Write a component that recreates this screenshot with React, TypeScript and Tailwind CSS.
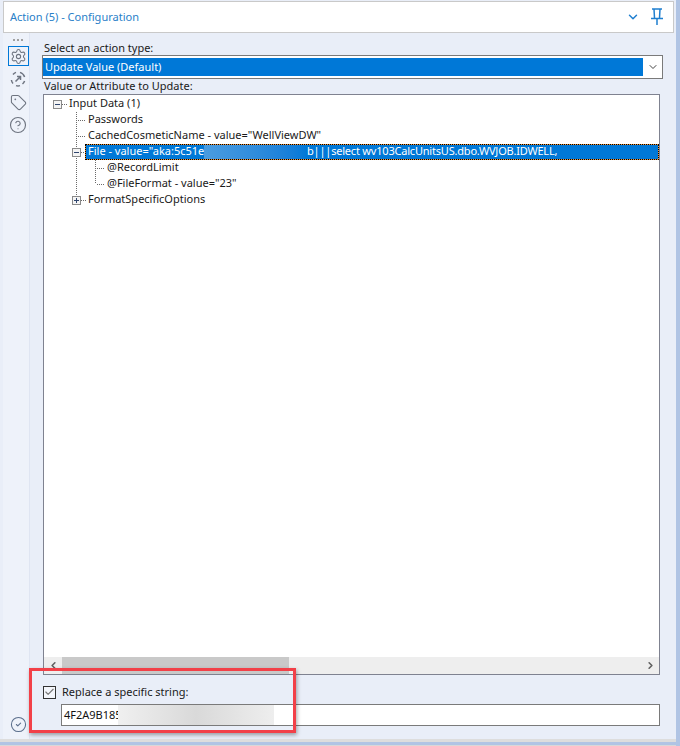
import { Settings, Tag, CircleHelp, CircleCheck, ChevronDown, ChevronLeft, ChevronRight, Check } from 'lucide-react'

type Cell = 'blank' | 'v' | 'tee' | 'ell' | 'minus' | 'teeMinus' | 'ellPlus'

const font = 'font-["Noto_Sans",sans-serif]'

function Expander({ plus }: { plus?: boolean }) {
  return (
    <>
      <rect x="5.5" y="4.5" width="8" height="8" fill="#f4f4f4" stroke="#8a8a8a" />
      <path d="M7 8.5h5" stroke="#30466e" />
      {plus && <path d="M9.5 6v5" stroke="#30466e" />}
    </>
  )
}

function TreeCell({ kind }: { kind: Cell }) {
  const dot = { stroke: '#6b6b6b', strokeDasharray: '1 1', fill: 'none' }
  return (
    <svg width="19" height="16" className="shrink-0">
      {(kind === 'v' || kind === 'tee' || kind === 'teeMinus') && <path d="M9.5 0v16" {...dot} />}
      {(kind === 'ell' || kind === 'ellPlus') && <path d="M9.5 0v8" {...dot} />}
      {(kind === 'tee' || kind === 'ell') && <path d="M11 8.5H19" {...dot} />}
      {(kind === 'minus' || kind === 'teeMinus' || kind === 'ellPlus') && <path d="M14 8.5h5" {...dot} />}
      {(kind === 'minus' || kind === 'teeMinus') && <Expander />}
      {kind === 'ellPlus' && <Expander plus />}
    </svg>
  )
}

const rows: { cells: Cell[]; text: string }[] = [
  { cells: ['minus'], text: 'Input Data (1)' },
  { cells: ['blank', 'tee'], text: 'Passwords' },
  { cells: ['blank', 'tee'], text: 'CachedCosmeticName - value="WellViewDW"' },
  { cells: ['blank', 'teeMinus'], text: '' },
  { cells: ['blank', 'v', 'tee'], text: '@RecordLimit' },
  { cells: ['blank', 'v', 'ell'], text: '@FileFormat - value="23"' },
  { cells: ['blank', 'ellPlus'], text: 'FormatSpecificOptions' },
]

function ToolButton({ active, children }: { active?: boolean; children: React.ReactNode }) {
  return (
    <div className={`w-[21px] h-[20px] flex items-center justify-center border ${active ? 'border-[#0078d7]' : 'border-transparent'}`}>
      {children}
    </div>
  )
}

export default function App() {
  return (
    <div className={`relative w-[680px] h-[746px] overflow-hidden bg-[#e9eef8] text-[11px] leading-[16px] text-[#1a1a1a] flex flex-col ${font}`}>
      {/* Title bar */}
      <div className="mt-[1px] ml-[3px] mr-[6px] h-[32px] shrink-0 bg-white border border-[#c9c9c9] flex items-center pl-[6px] pr-[9px]">
        <span className="text-[#2a80c8]">Action (5) - Configuration</span>
        <ChevronDown size={14} strokeWidth={2.5} className="ml-auto mr-[10px] text-[#1f7fd0]" />
        <svg width="14" height="18" viewBox="0 0 14 18" fill="none" stroke="#1f7fd0" strokeWidth="1.5">
          <path d="M2 1h10M4 1l.5 9M10 1l-.5 9M1 10.5h12M7 11v6" />
        </svg>
      </div>

      <div className="flex-1 flex min-h-0">
        {/* Tool rail */}
        <div className="ml-[3px] w-[27px] bg-[#eef2fa] border-r border-[#dfe5f2] flex flex-col items-center pl-[4px] pt-[3px] pb-[6px]">
          <div className="h-[8px] flex gap-[2px] items-center mb-[2px]">
            <i className="w-[2px] h-[2px] bg-[#a0a0a0]" />
            <i className="w-[2px] h-[2px] bg-[#a0a0a0]" />
            <i className="w-[2px] h-[2px] bg-[#a0a0a0]" />
          </div>
          <div className="flex flex-col gap-[3px] text-[#6e7480]">
            <ToolButton active><Settings size={17} strokeWidth={1.5} /></ToolButton>
            <ToolButton>
              <svg width="16" height="16" viewBox="0 0 16 16" fill="none" stroke="currentColor" strokeWidth="1.5">
                <path d="M3 3.5A7 7 0 0 1 6 1.4M10 1.4A7 7 0 0 1 14.6 6M14.6 10A7 7 0 0 1 12.5 13M10 14.6A7 7 0 0 1 6 14.6M3 12.5A7 7 0 0 1 1.4 9" />
                <path d="M5.5 10.5 10.5 5.5M7 5.5h3.5V9" />
              </svg>
            </ToolButton>
            <ToolButton><Tag size={17} strokeWidth={1.5} /></ToolButton>
            <ToolButton><CircleHelp size={18} strokeWidth={1.5} /></ToolButton>
          </div>
          <CircleCheck size={17} strokeWidth={1.5} className="mt-auto text-[#5b6f8c]" />
        </div>

        {/* Config panel */}
        <div className="flex-1 min-w-0 pl-[10px] pr-[16px] pt-[7px] flex flex-col">
          <div className="pl-[4px] h-[16px] mb-[-1px]">Select an action type:</div>
          <div className="h-[24px] ml-[2px] mr-[1px] border border-[#7a7a7a] bg-white flex pt-[2px] pb-[2px] items-stretch">
            <div className="w-[600px] bg-[#0078d7] text-white pl-[2px] leading-[18px]">Update Value (Default)</div>
            <div className="flex-1 flex items-center justify-center text-[#444]">
              <ChevronDown size={12} />
            </div>
          </div>
          <div className="pl-[4px] mt-[-1px] h-[16px]">Value or Attribute to Update:</div>
          <div className="ml-[3px] mr-[4px] h-[581px] border border-[#7f8290] bg-white flex flex-col">
            <div className="flex-1 pl-[4px] pt-[1px] min-h-0">
              {rows.map((r, i) => (
                <div key={i} className="flex h-[16px] items-center whitespace-nowrap">
                  {r.cells.map((c, j) => <TreeCell key={j} kind={c} />)}
                  {i === 3 ? (
                    <div className="ml-[-1px] flex-1 h-[16px] bg-[#0078d7] text-white border border-[#f09030] outline-1 -outline-offset-1 outline-dotted outline-black pl-[2px] flex items-center">
                      <span className="w-[116px] shrink-0 mb-[2px]">File - value="aka:5c51e</span>
                      <span className="w-[103px] h-[14px] shrink-0 bg-gradient-to-r from-[#4a9ce0] via-[#2f8cdc] to-[#0078d7]" />
                      <span className="tracking-[-0.2px] mb-[2px]">b|||select wv103CalcUnitsUS.dbo.WVJOB.IDWELL,</span>
                    </div>
                  ) : (
                    <span className="ml-[2px] mb-[2px]">{r.text}</span>
                  )}
                </div>
              ))}
            </div>
            <div className="h-[17px] bg-[#eeeeee] flex items-center">
              <span className="w-[18px] flex justify-center text-[#606060]"><ChevronLeft size={11} strokeWidth={3.5} /></span>
              <div className="w-[227px] h-[17px] bg-[#c9c9c9]" />
              <span className="ml-auto w-[18px] flex justify-center text-[#606060]"><ChevronRight size={11} strokeWidth={3.5} /></span>
            </div>
          </div>
          <div className="mt-[9px] ml-[3px] flex items-center h-[16px]">
            <div className="w-[13px] h-[13px] border border-[#333] bg-[#f4f6fb] flex items-center justify-center">
              <Check size={12} strokeWidth={2.5} className="text-[#777]" />
            </div>
            <span className="ml-[6px]">Replace a specific string:</span>
          </div>
          <div className="mt-[4px] ml-[21px] mr-[4px] h-[22px] border border-[#7a7a7a] bg-white flex items-center pl-[2px]">
            <span className="w-[54px] shrink-0 text-[#111]">4F2A9B185</span>
            <span className="w-[156px] h-[20px] bg-gradient-to-r from-[#f0f0f0] via-[#d9d9d9] to-[#eeeeee]" />
          </div>
        </div>
      </div>

      {/* Bottom frame */}
      <div className="h-[7px] shrink-0 flex flex-col">
        <div className="h-[3px] bg-[#dddddd]" />
        <div className="h-[3px] bg-[#b0c4e4]" />
        <div className="h-[1px] bg-[#d8d8d8]" />
      </div>
      <div className="absolute right-0 top-0 bottom-0 w-[4px] bg-[#b0c4e4]" />

      {/* Annotation */}
      <div className="absolute left-[29px] top-[668px] w-[267px] h-[65px] border-[3px] border-[#f24048] shadow-[1px_2px_4px_rgba(0,0,0,0.35)]" />
    </div>
  )
}
